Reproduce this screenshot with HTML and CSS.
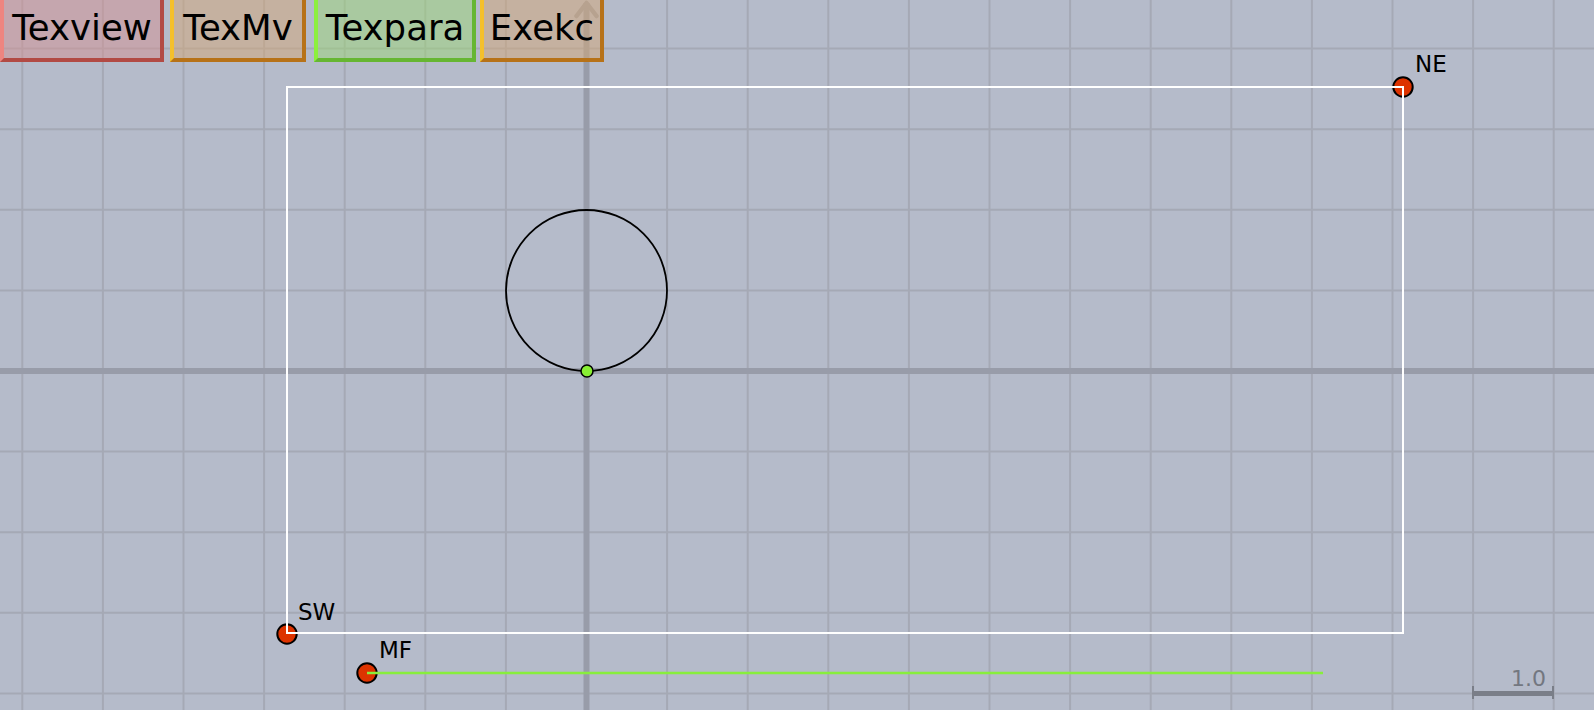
FILE: index.html
```html
<!DOCTYPE html>
<html lang="en">
<head>
<meta charset="utf-8">
<title>Canvas</title>
<link rel="stylesheet" href="styles.css">
</head>
<body>
<main class="stage">
  <svg class="canvas" width="1594" height="710" viewBox="0 0 1594 710" xmlns="http://www.w3.org/2000/svg">
    <g class="grid">
      <line x1="22.3" y1="0" x2="22.3" y2="710"/>
      <line x1="102.9" y1="0" x2="102.9" y2="710"/>
      <line x1="183.5" y1="0" x2="183.5" y2="710"/>
      <line x1="264.1" y1="0" x2="264.1" y2="710"/>
      <line x1="344.7" y1="0" x2="344.7" y2="710"/>
      <line x1="425.3" y1="0" x2="425.3" y2="710"/>
      <line x1="505.9" y1="0" x2="505.9" y2="710"/>
      <line x1="667.1" y1="0" x2="667.1" y2="710"/>
      <line x1="747.7" y1="0" x2="747.7" y2="710"/>
      <line x1="828.3" y1="0" x2="828.3" y2="710"/>
      <line x1="908.9" y1="0" x2="908.9" y2="710"/>
      <line x1="989.5" y1="0" x2="989.5" y2="710"/>
      <line x1="1070.1" y1="0" x2="1070.1" y2="710"/>
      <line x1="1150.7" y1="0" x2="1150.7" y2="710"/>
      <line x1="1231.3" y1="0" x2="1231.3" y2="710"/>
      <line x1="1311.9" y1="0" x2="1311.9" y2="710"/>
      <line x1="1392.5" y1="0" x2="1392.5" y2="710"/>
      <line x1="1473.1" y1="0" x2="1473.1" y2="710"/>
      <line x1="1553.7" y1="0" x2="1553.7" y2="710"/>
      <line x1="0" y1="48.6" x2="1594" y2="48.6"/>
      <line x1="0" y1="129.2" x2="1594" y2="129.2"/>
      <line x1="0" y1="209.8" x2="1594" y2="209.8"/>
      <line x1="0" y1="290.4" x2="1594" y2="290.4"/>
      <line x1="0" y1="451.6" x2="1594" y2="451.6"/>
      <line x1="0" y1="532.2" x2="1594" y2="532.2"/>
      <line x1="0" y1="612.8" x2="1594" y2="612.8"/>
      <line x1="0" y1="693.4" x2="1594" y2="693.4"/>
    </g>
    <g class="axes">
      <line x1="0" y1="371" x2="1594" y2="371"/>
      <line x1="586.5" y1="3" x2="586.5" y2="710"/>
      <polyline points="576.5,16 586.5,3 596.5,16"/>
    </g>

    <circle class="shape-circle" cx="586.5" cy="290.5" r="80.5"/>

    <circle class="pt pt-red" cx="1403" cy="87" r="9.7"/>
    <circle class="pt pt-red" cx="287" cy="634" r="9.7"/>
    <circle class="pt pt-red" cx="367" cy="673" r="9.7"/>

    <rect class="frame" x="287" y="87" width="1116" height="546"/>
    <line class="track" x1="367" y1="673" x2="1323" y2="673"/>

    <circle class="pt pt-green" cx="587" cy="371" r="6"/>

    <text class="pt-label" x="1415" y="72">NE</text>
    <text class="pt-label" x="298" y="620">SW</text>
    <text class="pt-label" x="379" y="658">MF</text>

    <g class="scale">
      <line x1="1472" y1="693.5" x2="1554" y2="693.5" class="scale-bar"/>
      <line x1="1473" y1="686" x2="1473" y2="699" class="scale-tick"/>
      <line x1="1553" y1="686" x2="1553" y2="699" class="scale-tick"/>
      <text class="scale-text" x="1546" y="686">1.0</text>
    </g>
  </svg>

  <nav class="toolbar">
    <button class="tb tb-view">Texview</button>
    <button class="tb tb-mv">TexMv</button>
    <button class="tb tb-para">Texpara</button>
    <button class="tb tb-exe">Exekc</button>
  </nav>
</main>
</body>
</html>
```

FILE: styles.css
```css
html, body {
  margin: 0;
  padding: 0;
  width: 1594px;
  height: 710px;
  overflow: hidden;
  background: #b5bbca;
  font-family: "DejaVu Sans", "Noto Sans", sans-serif;
}

.stage {
  position: relative;
  width: 1594px;
  height: 710px;
}

.canvas {
  display: block;
}

.grid line {
  stroke: #a5a9b5;
  stroke-width: 2;
}

.axes line,
.axes polyline {
  stroke: #989ca9;
  stroke-width: 6;
  fill: none;
}

.axes polyline {
  stroke-width: 4.5;
  stroke-linecap: round;
  stroke-linejoin: round;
}

.shape-circle {
  fill: none;
  stroke: #000;
  stroke-width: 1.8;
}

.pt {
  stroke: #000;
  stroke-width: 2;
}

.pt-red {
  fill: #dd3300;
}

.pt-green {
  fill: #88ee33;
  stroke-width: 1.5;
}

.frame {
  fill: none;
  stroke: #ffffff;
  stroke-width: 2;
}

.track {
  stroke: #88ee3c;
  stroke-width: 2.5;
}

.pt-label {
  font-family: "DejaVu Sans", sans-serif;
  font-size: 23px;
  fill: #000;
}

.scale-bar {
  stroke: #7a7e88;
  stroke-width: 5;
}

.scale-tick {
  stroke: #7a7e88;
  stroke-width: 2;
}

.scale-text {
  font-family: "DejaVu Sans", sans-serif;
  font-size: 22px;
  fill: #737780;
  text-anchor: end;
}

.toolbar {
  position: absolute;
  top: 0;
  left: 0;
  display: flex;
  align-items: flex-start;
}

.tb {
  box-sizing: border-box;
  height: 62px;
  margin: 0;
  padding: 2px 0 4px 0;
  border-style: solid;
  border-width: 0 4px 4px 4px;
  font-family: "DejaVu Sans", sans-serif;
  font-size: 35.5px;
  line-height: 52px;
  color: #000;
  text-align: center;
  white-space: nowrap;
  cursor: pointer;
}

.tb-view {
  width: 164px;
  background: rgba(213, 145, 146, 0.5);
  border-left-color: #ee8580;
  border-right-color: #b24a44;
  border-bottom-color: #b24a44;
}

.tb-mv {
  width: 136px;
  margin-left: 6px;
  background: rgba(213, 167, 118, 0.5);
  border-left-color: #f4c02c;
  border-right-color: #b77218;
  border-bottom-color: #b77218;
}

.tb-para {
  width: 162px;
  margin-left: 8px;
  background: rgba(157, 215, 118, 0.5);
  border-left-color: #8cf03e;
  border-right-color: #66b632;
  border-bottom-color: #66b632;
}

.tb-exe {
  width: 124px;
  margin-left: 4px;
  background: rgba(213, 167, 118, 0.5);
  border-left-color: #f4c02c;
  border-right-color: #b77218;
  border-bottom-color: #b77218;
}
```
